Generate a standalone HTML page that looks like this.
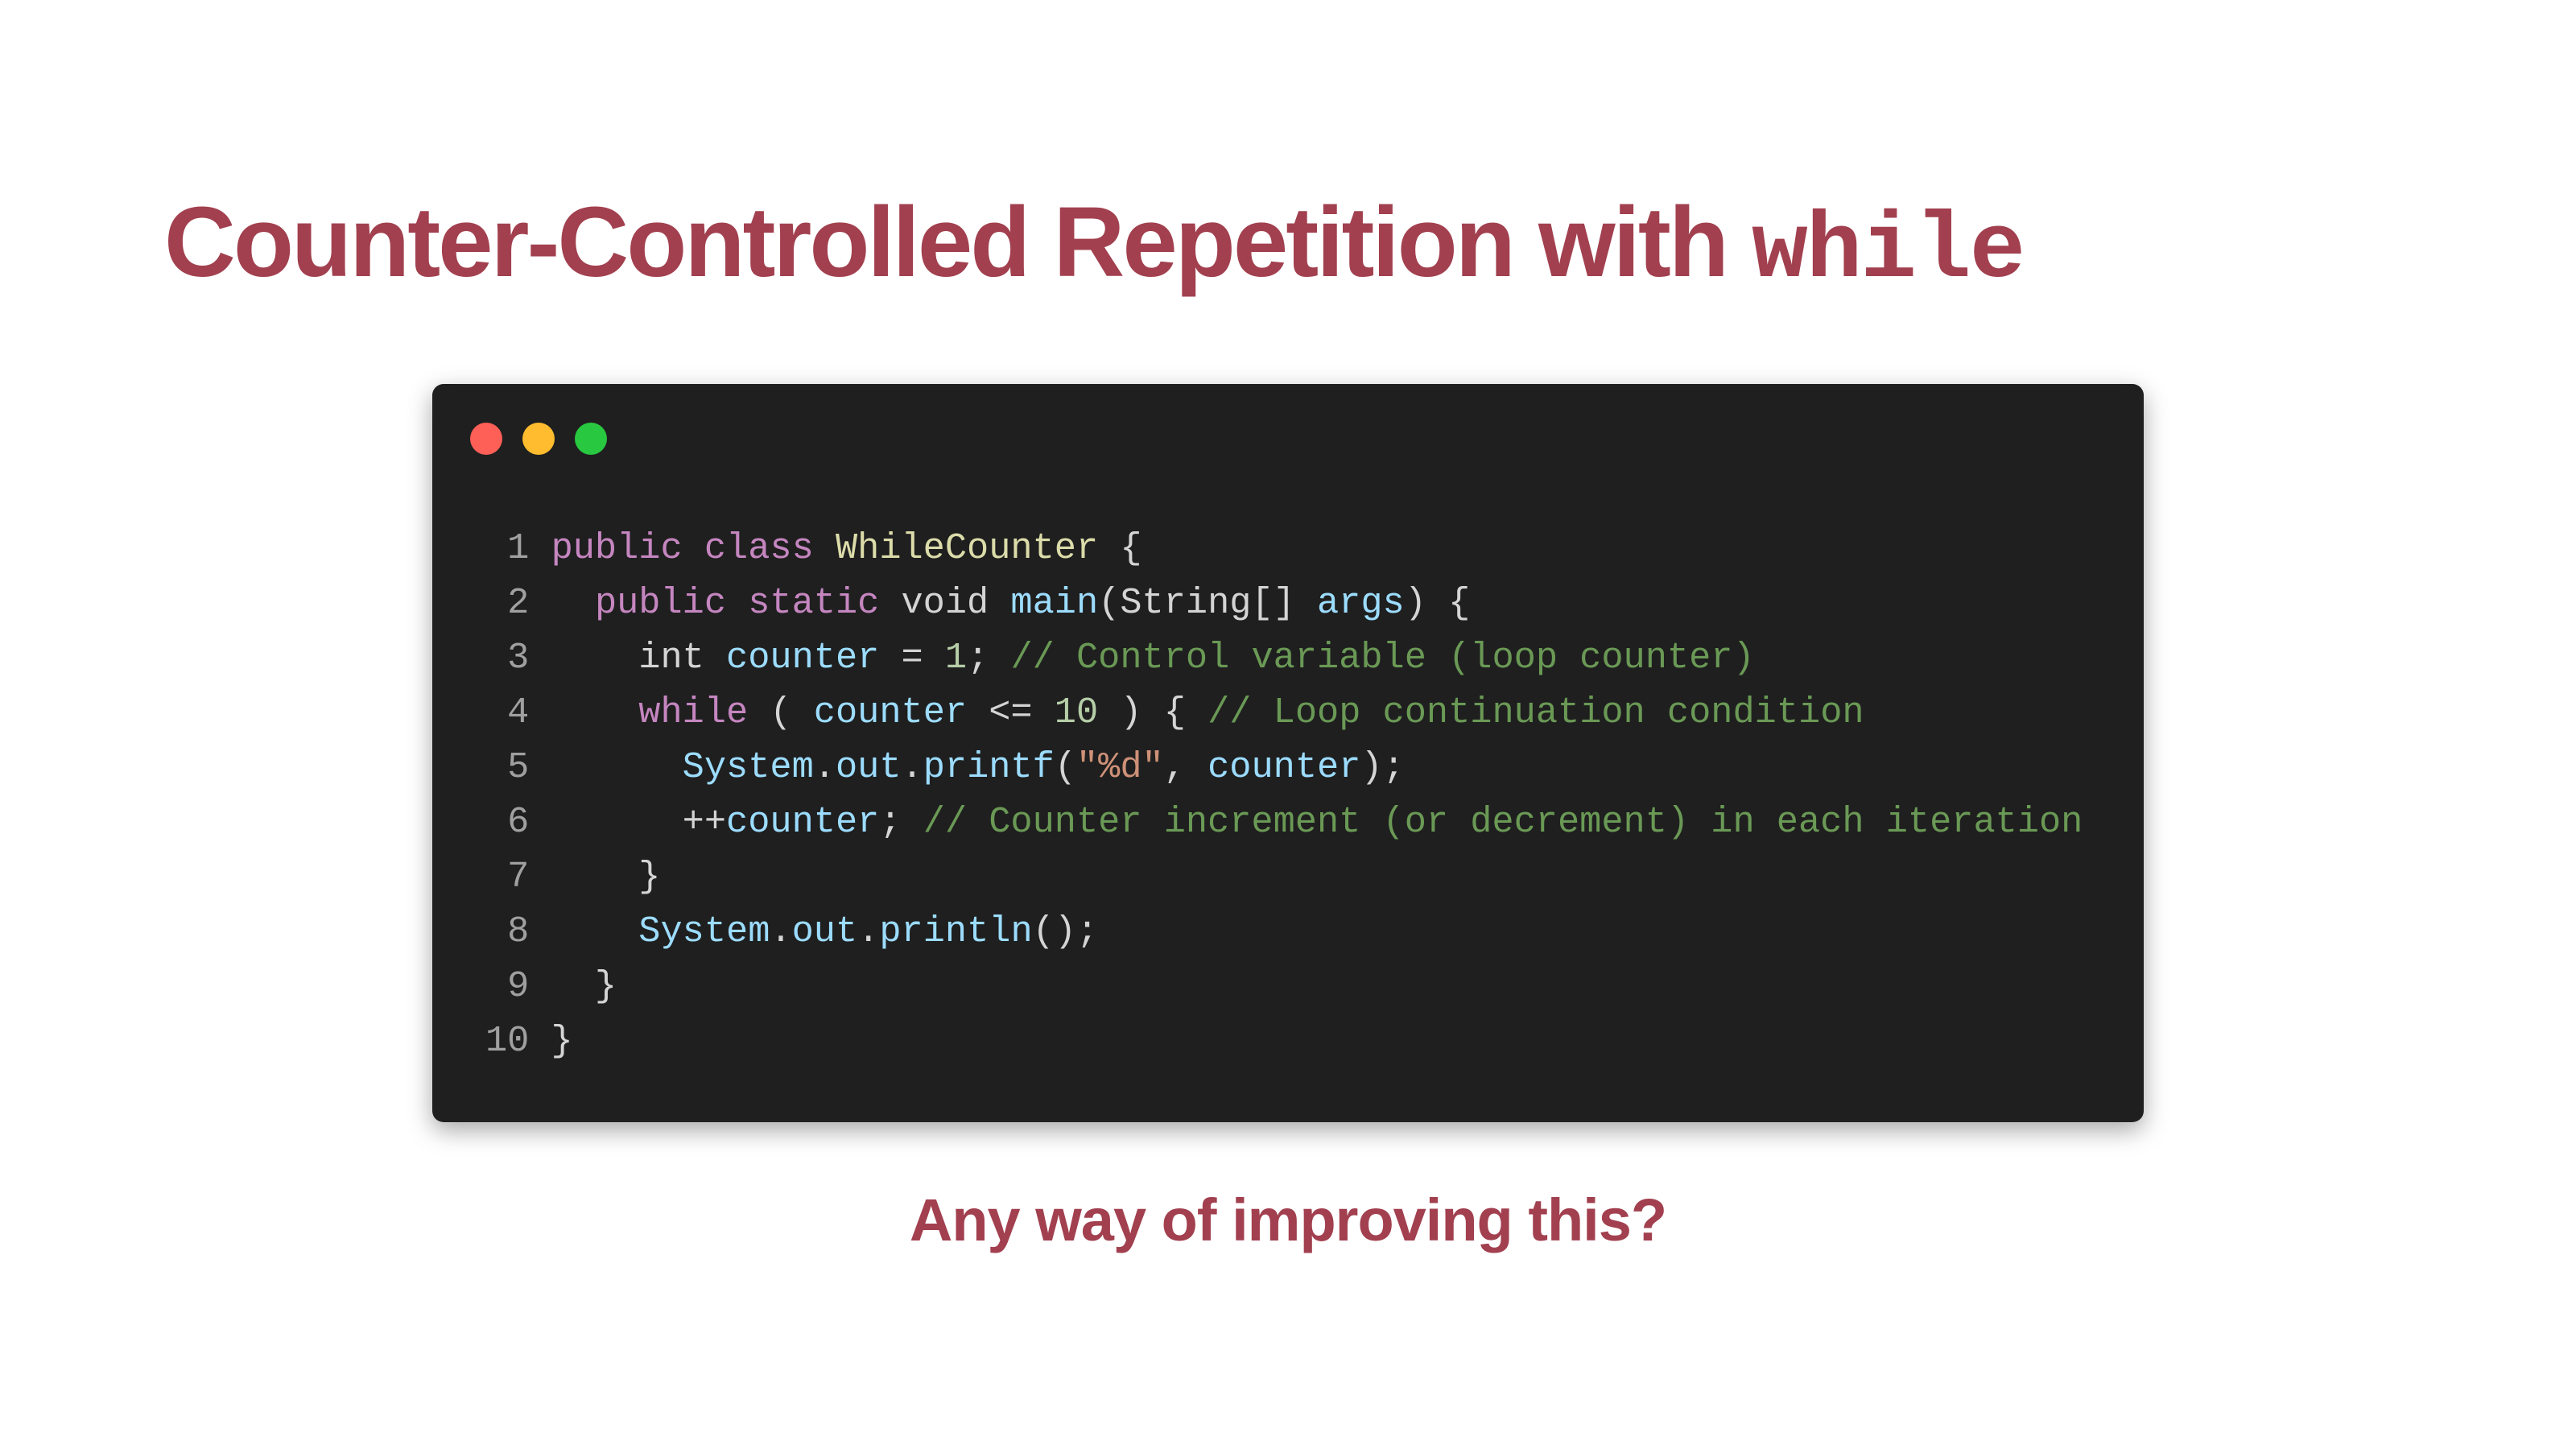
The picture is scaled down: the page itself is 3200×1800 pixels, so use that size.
<!DOCTYPE html>
<html><head><meta charset="utf-8"><style>
html,body{margin:0;padding:0;background:#fff;width:3200px;height:1800px;overflow:hidden;}
.title{position:absolute;left:204px;top:222px;font-family:"Liberation Sans",sans-serif;font-weight:bold;font-size:123px;color:#a2404f;letter-spacing:-3px;white-space:nowrap;line-height:160px;}
.title code{font-family:"Liberation Mono",monospace;font-weight:bold;font-size:116px;letter-spacing:-2px;}
.box{position:absolute;left:537px;top:477px;width:2126px;height:917px;background:#1f1f1f;border-radius:14px;box-shadow:0 10px 30px rgba(0,0,0,0.35);}
.dot{position:absolute;top:48px;width:40px;height:40px;border-radius:50%;}
pre{position:absolute;left:66px;top:170px;margin:0;font-family:"Liberation Mono",monospace;font-size:45.3px;line-height:68px;color:#d4d4d4;}
.n{color:#a0a0a0}.k{color:#c586c0}.c{color:#dcdcaa}.v{color:#9cdcfe}.m{color:#6a9955}.d{color:#b5cea8}.s{color:#ce9178}
.sub{position:absolute;left:0;width:3200px;top:1466px;text-align:center;font-family:"Liberation Sans",sans-serif;font-weight:bold;font-size:74px;color:#a2404f;letter-spacing:-1px;line-height:100px;}
</style></head><body>
<div class="title">Counter-Controlled Repetition with <code>while</code></div>
<div class="box">
<div class="dot" style="left:47px;background:#fe5f57"></div>
<div class="dot" style="left:112px;background:#febc2e"></div>
<div class="dot" style="left:177px;background:#28c840"></div>
<pre><span class="n"> 1</span> <span class="k">public class</span> <span class="c">WhileCounter</span> {
<span class="n"> 2</span>   <span class="k">public static</span> void <span class="v">main</span>(String[] <span class="v">args</span>) {
<span class="n"> 3</span>     int <span class="v">counter</span> = <span class="d">1</span>; <span class="m">// Control variable (loop counter)</span>
<span class="n"> 4</span>     <span class="k">while</span> ( <span class="v">counter</span> &lt;= <span class="d">10</span> ) { <span class="m">// Loop continuation condition</span>
<span class="n"> 5</span>       <span class="v">System</span>.<span class="v">out</span>.<span class="v">printf</span>(<span class="s">"%d"</span>, <span class="v">counter</span>);
<span class="n"> 6</span>       ++<span class="v">counter</span>; <span class="m">// Counter increment (or decrement) in each iteration</span>
<span class="n"> 7</span>     }
<span class="n"> 8</span>     <span class="v">System</span>.<span class="v">out</span>.<span class="v">println</span>();
<span class="n"> 9</span>   }
<span class="n">10</span> }</pre>
</div>
<div class="sub">Any way of improving this?</div>
</body></html>
